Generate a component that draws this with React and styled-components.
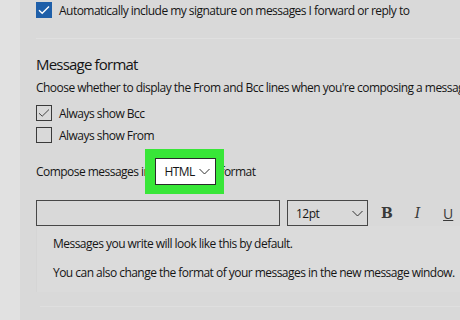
import React from "react";
import styled, { createGlobalStyle } from "styled-components";

const Global = createGlobalStyle`
  html, body { margin: 0; padding: 0; }
  body { font-family: "Open Sans", "Noto Sans", sans-serif; color: #151515; }
`;

const Page = styled.div`
  width: 460px;
  height: 320px;
  overflow: hidden;
  display: flex;
  background: #d9d9d9;
`;

const SideStrip = styled.div`
  width: 20px;
  flex: none;
  background: #e1e1e1;
`;

const Panel = styled.div`
  flex: 1;
  display: flex;
  flex-direction: column;
  padding-left: 16px;
  min-width: 0;
  white-space: nowrap;
  font-size: 12px;
  letter-spacing: -0.53px;
`;

const CheckRow = styled.label`
  display: flex;
  align-items: center;
  gap: 7px;
  height: 22px;
  margin-top: ${(p) => p.$mt || 0}px;
`;

const Box = styled.span`
  width: 16px;
  height: 16px;
  box-sizing: border-box;
  flex: none;
  display: flex;
  align-items: center;
  justify-content: center;
  background: ${(p) => (p.$filled ? "#1e5fa9" : "transparent")};
  border: 1px solid ${(p) => (p.$filled ? "#1e5fa9" : "#3a3a3a")};
`;

const Divider = styled.div`
  height: 1px;
  background: #e0e0e0;
  margin: 17px 0 0 0;
  margin-right: -20px;
`;

const Heading = styled.div`
  font-size: 15px;
  letter-spacing: -0.8px;
  margin-top: 15px;
  line-height: 20px;
`;

const Desc = styled.div`
  line-height: 18px;
  margin-top: 5px;
`;

const ComposeRow = styled.div`
  display: flex;
  align-items: center;
  height: 27px;
  margin-top: 12px;
`;

const HighlightWrap = styled.div`
  position: relative;
  margin: 0 4px 0 5px;
  flex: none;
  display: flex;
`;

const Highlight = styled.div`
  position: absolute;
  left: -10px;
  right: -8px;
  top: -9px;
  bottom: -9px;
  background: #38e638;
`;

const Select = styled.div`
  position: relative;
  box-sizing: border-box;
  display: flex;
  align-items: center;
  justify-content: space-between;
  width: ${(p) => p.$w}px;
  height: ${(p) => p.$h || 26}px;
  border: 1px solid ${(p) => p.$border || "#474747"};
  background: ${(p) => p.$bg || "transparent"};
  padding: 0 ${(p) => p.$pr || 4}px 0 ${(p) => p.$pl || 8}px;
  flex: none;
`;

const Toolbar = styled.div`
  display: flex;
  align-items: center;
  margin-top: 15px;
  gap: 7px;
`;

const FmtBtn = styled.span`
  width: 28px;
  text-align: center;
  font-size: 14px;
  letter-spacing: 0;
  color: #3a3a3a;
  font-family: ${(p) => p.$font || '"DejaVu Serif", serif'};
  font-weight: ${(p) => (p.$bold ? 700 : 400)};
  font-style: ${(p) => (p.$italic ? "italic" : "normal")};
  text-decoration: ${(p) => (p.$under ? "underline" : "none")};
`;

const Preview = styled.div`
  display: flex;
  flex-direction: column;
  gap: 11px;
  padding: 9px 0 10px 16px;
  line-height: 18px;
  background: #dbdbdb;
  border-left: 1px solid #d5d5d5;
  margin-right: -20px;
`;

const Footer = styled.div`
  height: 1px;
  background: #dfdfdf;
  margin-top: 14px;
  margin-left: 4px;
  margin-right: -20px;
`;

const Chevron = () => (
  <svg width="11" height="7" viewBox="0 0 11 7">
    <polyline points="0.5,1 5.5,6 10.5,1" fill="none" stroke="#333" strokeWidth="1" />
  </svg>
);

const Tick = ({ color, w = 1.4 }) => (
  <svg width="12" height="10" viewBox="0 0 12 10">
    <polyline points="1,5.2 4.2,8.2 11,1.5" fill="none" stroke={color} strokeWidth={w} />
  </svg>
);

export default function App() {
  return (
    <>
      <Global />
      <Page>
        <SideStrip />
        <Panel>
          <CheckRow $mt={-1}>
            <Box $filled>
              <Tick color="#fff" />
            </Box>
            Automatically include my signature on messages I forward or reply to
          </CheckRow>
          <Divider />
          <Heading>Message format</Heading>
          <Desc>Choose whether to display the From and Bcc lines when you're composing a message.</Desc>
          <CheckRow $mt={5}>
            <Box>
              <Tick color="#444" w={1} />
            </Box>
            Always show Bcc
          </CheckRow>
          <CheckRow>
            <Box />
            Always show From
          </CheckRow>
          <ComposeRow>
            <span>Compose messages in</span>
            <HighlightWrap>
              <Highlight />
              <Select $w={61} $h={27} $bg="#fff" $border="#2a2a2a" $pl={8} $pr={5}>
                HTML
                <Chevron />
              </Select>
            </HighlightWrap>
            <span>format</span>
          </ComposeRow>
          <Toolbar>
            <Select $w={244} />
            <Select $w={81}>
              12pt
              <Chevron />
            </Select>
            <FmtBtn $bold>B</FmtBtn>
            <FmtBtn $italic>I</FmtBtn>
            <FmtBtn $under $font='"Open Sans", sans-serif'>U</FmtBtn>
          </Toolbar>
          <Preview>
            <span>Messages you write will look like this by default.</span>
            <span>You can also change the format of your messages in the new message window.</span>
          </Preview>
          <Footer />
        </Panel>
      </Page>
    </>
  );
}
